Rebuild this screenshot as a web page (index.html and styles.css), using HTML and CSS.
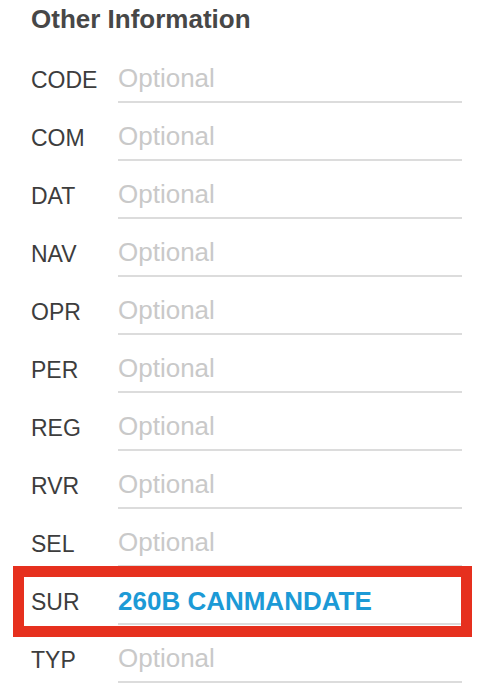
FILE: index.html
```html
<!DOCTYPE html>
<html>
<head>
<meta charset="utf-8">
<link rel="stylesheet" href="styles.css">
</head>
<body>
<div class="panel">
  <h2 class="title">Other Information</h2>
  <div class="row"><span class="label">CODE</span><span class="field placeholder">Optional</span></div>
  <div class="row"><span class="label">COM</span><span class="field placeholder">Optional</span></div>
  <div class="row"><span class="label">DAT</span><span class="field placeholder">Optional</span></div>
  <div class="row"><span class="label">NAV</span><span class="field placeholder">Optional</span></div>
  <div class="row"><span class="label">OPR</span><span class="field placeholder">Optional</span></div>
  <div class="row"><span class="label">PER</span><span class="field placeholder">Optional</span></div>
  <div class="row"><span class="label">REG</span><span class="field placeholder">Optional</span></div>
  <div class="row"><span class="label">RVR</span><span class="field placeholder">Optional</span></div>
  <div class="row"><span class="label">SEL</span><span class="field placeholder">Optional</span></div>
  <div class="row row-highlight"><span class="label">SUR</span><span class="field value">260B CANMANDATE</span></div>
  <div class="row"><span class="label">TYP</span><span class="field placeholder">Optional</span></div>
</div>
</body>
</html>
```
FILE: styles.css
```css
html, body {
  margin: 0;
  padding: 0;
  background: #ffffff;
}
body {
  font-family: "Liberation Sans", Arial, Helvetica, sans-serif;
  width: 486px;
  height: 700px;
  overflow: hidden;
}
.panel {
  padding: 4px 24px 0 31px;
}
.title {
  margin: 0;
  font-size: 26px;
  font-weight: bold;
  color: #474747;
  line-height: 30px;
  height: 41px;
}
.row {
  position: relative;
  display: flex;
  height: 58px;
}
.label {
  width: 87px;
  flex: none;
  padding-top: 14px;
  line-height: 42px;
  font-size: 23px;
  color: #3d3d3d;
}
.field {
  flex: 1;
  padding-top: 12px;
  line-height: 42px;
  height: 44px;
  border-bottom: 2px solid #dcdcdc;
  font-size: 26px;
  white-space: nowrap;
}
.placeholder {
  color: #c9c9c9;
}
.value {
  color: #1c9ad6;
  font-weight: bold;
  line-height: 44px;
}
.row-highlight::after {
  content: "";
  position: absolute;
  left: -18px;
  right: -10px;
  top: -1px;
  height: 49px;
  border: 11px solid #e6301e;
  pointer-events: none;
}
```
